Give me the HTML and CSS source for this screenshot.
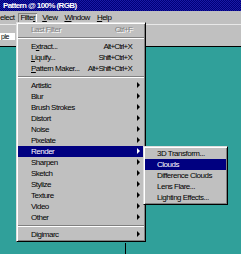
FILE: index.html
```html
<!DOCTYPE html>
<html lang="en">
<head>
    <meta charset="UTF-8">
    <title>Filter menu</title>
    <link rel="stylesheet" href="styles.css">
</head>
<body>
    <div class="app">
        <div class="titlebar">Pattern @ 100% (RGB)</div>
        <div class="menubar">
            <span class="mb-item first">elect</span>
            <span class="mb-item open">Filte<u>r</u></span>
            <span class="mb-item"><u>V</u>iew</span>
            <span class="mb-item"><u>W</u>indow</span>
            <span class="mb-item"><u>H</u>elp</span>
        </div>
        <div class="optionsbar">
            <div class="field">ple</div>
        </div>
        <div class="workspace">
            <div class="doc-edge"></div>
        </div>

        <div class="menu">
            <div class="row disabled"><span class="label">Last Filter</span><span class="key">Ctrl+F</span><span class="arrow"></span></div>
            <div class="sep"></div>
            <div class="row"><span class="label">E<u>x</u>tract...</span><span class="key">Alt+Ctrl+X</span><span class="arrow"></span></div>
            <div class="row"><span class="label"><u>L</u>iquify...</span><span class="key">Shift+Ctrl+X</span><span class="arrow"></span></div>
            <div class="row"><span class="label"><u>P</u>attern Maker...</span><span class="key">Alt+Shift+Ctrl+X</span><span class="arrow"></span></div>
            <div class="sep"></div>
            <div class="row"><span class="label">Artistic</span><span class="arrow sub"></span></div>
            <div class="row"><span class="label">Blur</span><span class="arrow sub"></span></div>
            <div class="row"><span class="label">Brush Strokes</span><span class="arrow sub"></span></div>
            <div class="row"><span class="label">Distort</span><span class="arrow sub"></span></div>
            <div class="row"><span class="label">Noise</span><span class="arrow sub"></span></div>
            <div class="row"><span class="label">Pixelate</span><span class="arrow sub"></span></div>
            <div class="row active"><span class="label">Render</span><span class="arrow sub"></span></div>
            <div class="row"><span class="label">Sharpen</span><span class="arrow sub"></span></div>
            <div class="row"><span class="label">Sketch</span><span class="arrow sub"></span></div>
            <div class="row"><span class="label">Stylize</span><span class="arrow sub"></span></div>
            <div class="row"><span class="label">Texture</span><span class="arrow sub"></span></div>
            <div class="row"><span class="label">Video</span><span class="arrow sub"></span></div>
            <div class="row"><span class="label">Other</span><span class="arrow sub"></span></div>
            <div class="sep"></div>
            <div class="row"><span class="label">Digimarc</span><span class="arrow sub"></span></div>
        </div>

        <div class="menu submenu">
            <div class="row"><span class="label">3D Transform...</span></div>
            <div class="row active"><span class="label">Clouds</span></div>
            <div class="row"><span class="label">Difference Clouds</span></div>
            <div class="row"><span class="label">Lens Flare...</span></div>
            <div class="row"><span class="label">Lighting Effects...</span></div>
        </div>
    </div>
</body>
</html>
```

FILE: styles.css
```css
body {
    margin: 0;
    font-family: "Liberation Sans", Arial, sans-serif;
    font-size: 8px;
    letter-spacing: -0.5px;
    color: #000;
}
.app {
    position: relative;
    width: 241px;
    height: 254px;
    overflow: hidden;
    display: flex;
    flex-direction: column;
    background: #30a09a;
}
.titlebar {
    height: 11px;
    line-height: 11px;
    padding-left: 3px;
    color: #fff;
    font-weight: bold;
    letter-spacing: -0.6px;
    white-space: nowrap;
    background: repeating-conic-gradient(#000078 0 25%, #1a1aa6 0 50%) 0 0 / 2px 2px;
}
.menubar {
    height: 13px;
    display: flex;
    align-items: center;
    background: #c0c0c0;
}
.mb-item {
    padding: 0 2px;
    line-height: 10px;
    white-space: nowrap;
}
.mb-item + .mb-item { margin-left: 3px; }
.mb-item.first { padding-left: 0; margin-right: -1px; }
.mb-item.open {
    box-shadow: inset 1px 1px #808080, inset -1px -1px #fff;
}
u { text-decoration: underline; text-underline-offset: 1px; }

.optionsbar {
    height: 23px;
    box-sizing: border-box;
    display: flex;
    align-items: center;
    background: #c0c0c0;
    border-top: 1px solid #e8e8e8;
    border-bottom: 1px solid #000;
}
.field {
    width: 15px;
    height: 7px;
    padding-left: 1px;
    box-sizing: border-box;
    margin-top: 1px;
    background: #fff;
    overflow: hidden;
    line-height: 7px;
    font-size: 7px;
}
.workspace {
    position: relative;
    flex: 1;
}
.doc-edge {
    position: absolute;
    left: 125px;
    top: 196px;
    bottom: 0;
    width: 1px;
    background: #000;
}

.menu {
    position: absolute;
    left: 16px;
    top: 22px;
    width: 130px;
    box-sizing: border-box;
    padding: 1px 0;
    background: #c0c0c0;
    border: 1px solid;
    border-color: #dfdfdf #000 #000 #dfdfdf;
    box-shadow: inset 1px 1px #fff, inset -1px -1px #808080;
}
.row {
    height: 11px;
    line-height: 11px;
    display: flex;
    align-items: center;
    padding-left: 13px;
    margin: 0 1px;
    white-space: nowrap;
}
.row .label { flex: 1; }
.row .key { text-align: right; letter-spacing: -0.8px; }
.row .arrow {
    width: 12px;
    height: 11px;
    position: relative;
}
.arrow.sub::after {
    content: "";
    position: absolute;
    left: 5px;
    top: 2px;
    border-left: 3px solid #000;
    border-top: 3.5px solid transparent;
    border-bottom: 3.5px solid transparent;
}
.row.active { background: #000080; color: #fff; }
.row.active .arrow.sub::after { border-left-color: #fff; }
.row.disabled { color: #808080; text-shadow: 1px 1px #fff; }
.sep {
    height: 6px;
    margin: 0 1px;
    background: linear-gradient(#c0c0c0 2px, #808080 2px 3px, #fff 3px 4px, #c0c0c0 4px);
}

.submenu {
    left: 143px;
    top: 146px;
    width: 85px;
    padding: 1px 0;
}
.submenu .row { padding-left: 12px; }
```
